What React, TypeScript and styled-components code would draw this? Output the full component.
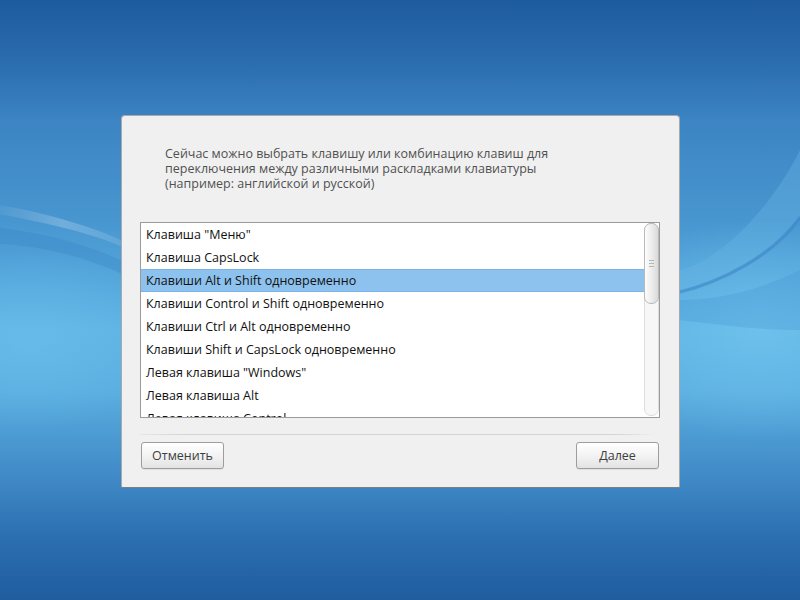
import React from "react";
import styled, { createGlobalStyle } from "styled-components";

const Global = createGlobalStyle`
  html, body { margin: 0; padding: 0; height: 100%; overflow: hidden; }
  #root { height: 100%; }
  * { box-sizing: border-box; }
`;

const Desktop = styled.div`
  position: relative;
  width: 100vw;
  height: 100vh;
  display: flex;
  align-items: flex-start;
  padding: 115px 0 0 121px;
  font-family: "Open Sans", "Noto Sans", sans-serif;
  background: linear-gradient(
    to bottom,
    #1d5b9e 0px,
    #2a6cae 60px,
    #3c84c3 120px,
    #4896d0 220px,
    #5db3e4 330px,
    #5aaee0 390px,
    #3f88c6 480px,
    #2b6eaf 540px,
    #1f5d9f 600px
  );
`;

const Waves = styled.svg`
  position: absolute;
  inset: 0;
  width: 100%;
  height: 100%;
  pointer-events: none;
`;

const Dialog = styled.div`
  position: relative;
  width: 559px;
  height: 373px;
  background: #f0f0f0;
  border: 1px solid #a9a9a9;
  border-bottom-color: #7e7e7e;
  border-radius: 4px 4px 2px 2px;
  padding: 30px 19px 18px 18px;
  display: flex;
  flex-direction: column;
`;

const Prompt = styled.p`
  margin: 0;
  padding-left: 25px;
  font-size: 12.5px;
  line-height: 15px;
  color: #505050;
`;

const ListBox = styled.div`
  margin-top: 31px;
  width: 520px;
  height: 196px;
  border: 1px solid #9b9b9b;
  background: #ffffff;
  display: flex;
  overflow: hidden;
`;

const Rows = styled.div`
  flex: 1;
  display: flex;
  flex-direction: column;
  overflow: hidden;
`;

const Row = styled.div<{ $selected?: boolean }>`
  flex: 0 0 23px;
  height: 23px;
  line-height: 23px;
  padding-left: 5px;
  font-size: 12.5px;
  color: #111;
  white-space: nowrap;
  background: ${(p) => (p.$selected ? "#8ec2ee" : "transparent")};
  box-shadow: ${(p) =>
    p.$selected ? "inset 0 1px 0 #7db3e4, inset 0 -1px 0 #7db3e4" : "none"};
`;

const ScrollTrack = styled.div`
  width: 15px;
  margin: 0 0 1px 0;
  background: #f7f7f7;
  border: 1px solid #dddddd;
  border-radius: 7px;
  display: flex;
  flex-direction: column;
`;

const Thumb = styled.div`
  margin: -1px -1px 0 -1px;
  height: 81px;
  border: 1px solid #b9b9b9;
  border-radius: 7px;
  background: linear-gradient(to right, #fdfdfd, #e9e9e9 60%, #d9d9d9);
  display: flex;
  flex-direction: column;
  align-items: center;
  justify-content: center;
  gap: 2px;
`;

const Grip = styled.span`
  display: block;
  width: 5px;
  height: 1px;
  background: #b5b5b5;
`;

const Separator = styled.div`
  margin-top: 16px;
  height: 1px;
  width: 516px;
  background: linear-gradient(
    to right,
    rgba(208, 208, 208, 0.3),
    #d4d4d4 8%,
    #d4d4d4 92%,
    rgba(208, 208, 208, 0)
  );
`;

const Buttons = styled.div`
  margin: 7px 0 0 1px;
  width: 518px;
  display: flex;
  justify-content: space-between;
`;

const Button = styled.button`
  width: 83px;
  height: 27px;
  margin: 0;
  padding: 0;
  border: 1px solid #9d9d9d;
  border-radius: 3px;
  background: linear-gradient(to bottom, #ffffff, #f3f3f3 50%, #e3e3e3);
  box-shadow: 0 1px 0 rgba(0, 0, 0, 0.06);
  font-family: "Open Sans", "Noto Sans", sans-serif;
  font-size: 12.5px;
  color: #3e3e3e;
  cursor: pointer;
`;

const items = [
  'Клавиша "Меню"',
  "Клавиша CapsLock",
  "Клавиши Alt и Shift одновременно",
  "Клавиши Control и Shift одновременно",
  "Клавиши Ctrl и Alt одновременно",
  "Клавиши Shift и CapsLock одновременно",
  'Левая клавиша "Windows"',
  "Левая клавиша Alt",
  "Левая клавиша Control",
];

export default function App() {
  return (
    <>
      <Global />
      <Desktop>
        <Waves viewBox="0 0 800 600" preserveAspectRatio="none">
          <defs>
            <linearGradient id="lstreak" x1="0" y1="0" x2="1" y2="0">
              <stop offset="0" stopColor="#ffffff" stopOpacity="0.05" />
              <stop offset="0.5" stopColor="#ffffff" stopOpacity="0.22" />
              <stop offset="1" stopColor="#ffffff" stopOpacity="0.1" />
            </linearGradient>
            <radialGradient id="glowR" cx="0.5" cy="0.5" r="0.5">
              <stop offset="0" stopColor="#74c6ee" stopOpacity="0.7" />
              <stop offset="1" stopColor="#74c6ee" stopOpacity="0" />
            </radialGradient>
            <radialGradient id="glowL" cx="0.5" cy="0.5" r="0.5">
              <stop offset="0" stopColor="#6cc0ec" stopOpacity="0.6" />
              <stop offset="1" stopColor="#6cc0ec" stopOpacity="0" />
            </radialGradient>
          </defs>
          <ellipse cx="760" cy="330" rx="160" ry="110" fill="url(#glowR)" />
          <ellipse cx="30" cy="340" rx="140" ry="90" fill="url(#glowL)" />
          <path
            d="M0 205 C 40 212, 90 225, 125 242 L 125 248 C 90 232, 40 222, 0 214 Z"
            fill="url(#lstreak)"
          />
          <path
            d="M0 228 C 40 232, 90 245, 125 262 L 125 275 C 80 255, 40 246, 0 244 Z"
            fill="#2f7cc0"
            opacity="0.25"
          />
          <path
            d="M680 290 C 720 280, 770 255, 800 215 L 800 150 C 770 210, 720 260, 680 270 Z"
            fill="#6ab8e6"
            opacity="0.35"
          />
          <path
            d="M680 292 C 720 282, 772 257, 800 218"
            stroke="#3d86c6"
            strokeWidth="3"
            fill="none"
            opacity="0.6"
          />
          <path
            d="M680 300 C 720 300, 760 290, 800 270 L 800 330 C 760 330, 720 325, 680 320 Z"
            fill="#3f8fcf"
            opacity="0.25"
          />
        </Waves>
        <Dialog>
          <Prompt>
            Сейчас можно выбрать клавишу или комбинацию клавиш для
            <br />
            переключения между различными раскладками клавиатуры
            <br />
            (например: английской и русской)
          </Prompt>
          <ListBox>
            <Rows>
              {items.map((t, i) => (
                <Row key={t} $selected={i === 2}>
                  {t}
                </Row>
              ))}
            </Rows>
            <ScrollTrack>
              <Thumb>
                <Grip />
                <Grip />
                <Grip />
              </Thumb>
            </ScrollTrack>
          </ListBox>
          <Separator />
          <Buttons>
            <Button>Отменить</Button>
            <Button>Далее</Button>
          </Buttons>
        </Dialog>
      </Desktop>
    </>
  );
}
